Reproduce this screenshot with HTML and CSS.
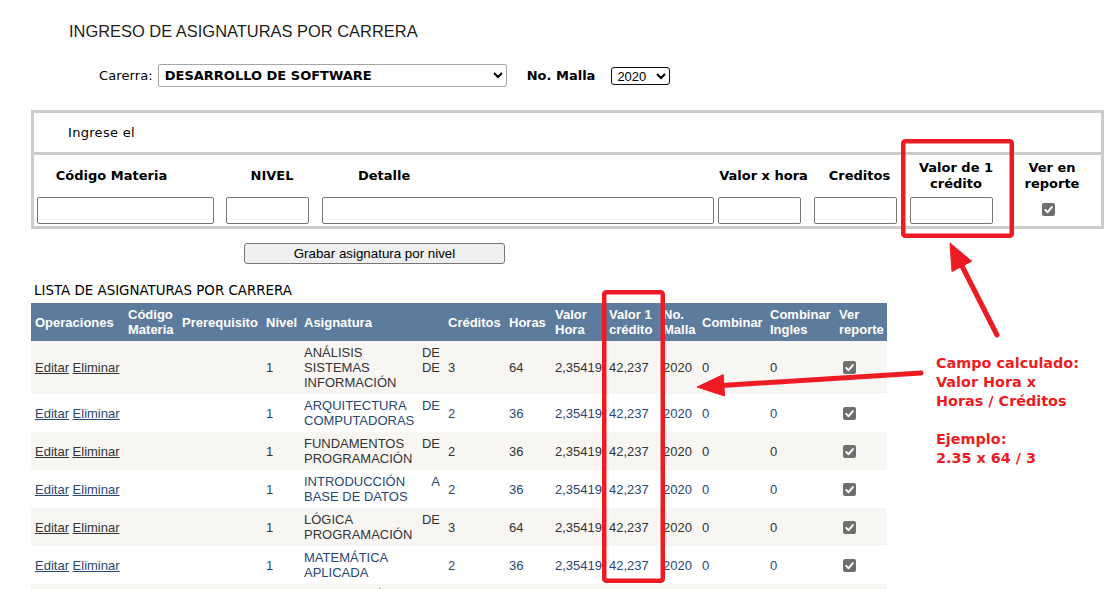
FILE: index.html
```html
<!DOCTYPE html>
<html lang="es">
<head>
<meta charset="utf-8">
<title>Ingreso de asignaturas por carrera</title>
<link rel="stylesheet" href="styles.css">
</head>
<body>
<div class="page">
  <h1 class="title">INGRESO DE ASIGNATURAS POR CARRERA</h1>

  <div class="filters">
    <span class="lbl">Carerra:</span>
    <select class="sel-carrera"><option>DESARROLLO DE SOFTWARE</option></select>
    <span class="lbl-bold">No. Malla</span>
    <select class="sel-malla"><option>2020</option></select>
  </div>

  <div class="form-box">
    <div class="form-intro">Ingrese el</div>
    <div class="form-fields">
      <div class="form-heads">
        <div class="fh fh-c">Código Materia</div>
        <div class="fh fh-c">NIVEL</div>
        <div class="fh fh-l">Detalle</div>
        <div class="fh fh-c">Valor x hora</div>
        <div class="fh fh-c">Creditos</div>
        <div class="fh fh-c fh-narrow">Valor de 1 crédito</div>
        <div class="fh fh-c fh-narrow2">Ver en reporte</div>
      </div>
      <div class="form-inputs">
        <input class="in in-codigo" type="text">
        <input class="in in-small gap-13b" type="text">
        <input class="in in-detalle gap-13" type="text">
        <input class="in in-small gap-4" type="text">
        <input class="in in-small gap-13" type="text">
        <input class="in in-small gap-13" type="text">
        <span class="chk chk-form"><svg viewBox="0 0 13 13" width="13" height="13"><path d="M3.2 6.9 L5.6 9.2 L9.9 4.1" fill="none" stroke="#fff" stroke-width="1.9" stroke-linecap="round" stroke-linejoin="round"/></svg></span>
      </div>
    </div>
  </div>

  <div class="actions"><button class="btn" type="button">Grabar asignatura por nivel</button></div>

  <div class="list-title">LISTA DE ASIGNATURAS POR CARRERA</div>

  <table class="grid">
    <colgroup>
      <col class="c-op"><col class="c-cod"><col class="c-pre"><col class="c-niv"><col class="c-asig"><col class="c-cre"><col class="c-hor"><col class="c-vh"><col class="c-vc"><col class="c-mal"><col class="c-comb"><col class="c-ing"><col class="c-ver">
    </colgroup>
    <thead>
      <tr>
        <th>Operaciones</th><th>Código Materia</th><th>Prerequisito</th><th>Nivel</th><th>Asignatura</th><th>Créditos</th><th>Horas</th><th>Valor Hora</th><th>Valor 1 crédito</th><th>No. Malla</th><th>Combinar</th><th>Combinar Ingles</th><th>Ver reporte</th>
      </tr>
    </thead>
    <tbody>
      <tr class="row-a">
        <td><a href="#">Editar</a> <a href="#">Eliminar</a></td><td></td><td></td><td>1</td><td class="asig">ANÁLISIS DE SISTEMAS DE INFORMACIÓN</td><td>3</td><td>64</td><td>2,35419</td><td>42,237</td><td>2020</td><td>0</td><td>0</td><td><span class="chk"><svg viewBox="0 0 13 13" width="13" height="13"><path d="M3.2 6.9 L5.6 9.2 L9.9 4.1" fill="none" stroke="#fff" stroke-width="1.9" stroke-linecap="round" stroke-linejoin="round"/></svg></span></td>
      </tr>
      <tr class="row-b">
        <td><a href="#">Editar</a> <a href="#">Eliminar</a></td><td></td><td></td><td>1</td><td class="asig">ARQUITECTURA DE COMPUTADORAS</td><td>2</td><td>36</td><td>2,35419</td><td>42,237</td><td>2020</td><td>0</td><td>0</td><td><span class="chk"><svg viewBox="0 0 13 13" width="13" height="13"><path d="M3.2 6.9 L5.6 9.2 L9.9 4.1" fill="none" stroke="#fff" stroke-width="1.9" stroke-linecap="round" stroke-linejoin="round"/></svg></span></td>
      </tr>
      <tr class="row-a">
        <td><a href="#">Editar</a> <a href="#">Eliminar</a></td><td></td><td></td><td>1</td><td class="asig">FUNDAMENTOS DE PROGRAMACIÓN</td><td>2</td><td>36</td><td>2,35419</td><td>42,237</td><td>2020</td><td>0</td><td>0</td><td><span class="chk"><svg viewBox="0 0 13 13" width="13" height="13"><path d="M3.2 6.9 L5.6 9.2 L9.9 4.1" fill="none" stroke="#fff" stroke-width="1.9" stroke-linecap="round" stroke-linejoin="round"/></svg></span></td>
      </tr>
      <tr class="row-b">
        <td><a href="#">Editar</a> <a href="#">Eliminar</a></td><td></td><td></td><td>1</td><td class="asig">INTRODUCCIÓN A BASE DE DATOS</td><td>2</td><td>36</td><td>2,35419</td><td>42,237</td><td>2020</td><td>0</td><td>0</td><td><span class="chk"><svg viewBox="0 0 13 13" width="13" height="13"><path d="M3.2 6.9 L5.6 9.2 L9.9 4.1" fill="none" stroke="#fff" stroke-width="1.9" stroke-linecap="round" stroke-linejoin="round"/></svg></span></td>
      </tr>
      <tr class="row-a">
        <td><a href="#">Editar</a> <a href="#">Eliminar</a></td><td></td><td></td><td>1</td><td class="asig">LÓGICA DE PROGRAMACIÓN</td><td>3</td><td>64</td><td>2,35419</td><td>42,237</td><td>2020</td><td>0</td><td>0</td><td><span class="chk"><svg viewBox="0 0 13 13" width="13" height="13"><path d="M3.2 6.9 L5.6 9.2 L9.9 4.1" fill="none" stroke="#fff" stroke-width="1.9" stroke-linecap="round" stroke-linejoin="round"/></svg></span></td>
      </tr>
      <tr class="row-b">
        <td><a href="#">Editar</a> <a href="#">Eliminar</a></td><td></td><td></td><td>1</td><td class="asig">MATEMÁTICA APLICADA</td><td>2</td><td>36</td><td>2,35419</td><td>42,237</td><td>2020</td><td>0</td><td>0</td><td><span class="chk"><svg viewBox="0 0 13 13" width="13" height="13"><path d="M3.2 6.9 L5.6 9.2 L9.9 4.1" fill="none" stroke="#fff" stroke-width="1.9" stroke-linecap="round" stroke-linejoin="round"/></svg></span></td>
      </tr>
      <tr class="row-a">
        <td><a href="#">Editar</a> <a href="#">Eliminar</a></td><td></td><td></td><td>1</td><td class="asig">TECNOLOGÍAS DE LA INFORMACIÓN Y COMUNICACIÓN</td><td>2</td><td>36</td><td>2,35419</td><td>42,237</td><td>2020</td><td>0</td><td>0</td><td><span class="chk"><svg viewBox="0 0 13 13" width="13" height="13"><path d="M3.2 6.9 L5.6 9.2 L9.9 4.1" fill="none" stroke="#fff" stroke-width="1.9" stroke-linecap="round" stroke-linejoin="round"/></svg></span></td>
      </tr>
    </tbody>
  </table>
</div>

<svg class="annot" width="1116" height="589" viewBox="0 0 1116 589">
  <rect x="903.25" y="141.25" width="108.5" height="94.5" rx="2" fill="none" stroke="#ed1c24" stroke-width="4.5"/>
  <rect x="604.25" y="292.25" width="58.5" height="288.5" rx="2" fill="none" stroke="#ed1c24" stroke-width="4.5"/>
  <line x1="997" y1="335" x2="962" y2="266" stroke="#ed1c24" stroke-width="5" stroke-linecap="round"/>
  <polygon points="950,243 952,271.5 971.8,261.2" fill="#ed1c24" stroke="#ed1c24" stroke-width="1" stroke-linejoin="round"/>
  <line x1="921" y1="373" x2="722" y2="385.4" stroke="#ed1c24" stroke-width="5" stroke-linecap="round"/>
  <polygon points="697,387 724.6,396 723.2,374.6" fill="#ed1c24" stroke="#ed1c24" stroke-width="1" stroke-linejoin="round"/>
</svg>
<div class="note">Campo calculado:<br>Valor Hora x<br>Horas / Créditos<br><br>Ejemplo:<br>2.35 x 64 / 3</div>
</body>
</html>
```

FILE: styles.css
```css
html, body {
  margin: 0;
  padding: 0;
}
body {
  position: relative;
  font-family: "DejaVu Sans", Verdana, sans-serif;
  font-size: 13px;
  color: #000;
  background: #fff;
  width: 1116px;
  overflow: hidden;
}
.page {
  padding-left: 31px;
}
.title {
  margin: 21px 0 0 38px;
  font-family: "Liberation Sans", Arial, sans-serif;
  font-weight: normal;
  font-size: 16.45px;
  line-height: 20px;
  color: #1e1e1e;
}
.filters {
  display: flex;
  align-items: center;
  height: 23px;
  margin-top: 23px;
  padding-left: 68px;
}
.lbl {
  font-size: 13px;
  letter-spacing: 0.1px;
}
.lbl-bold {
  font-weight: bold;
  margin-left: 20px;
}
.sel-carrera {
  margin-left: 5px;
  width: 349px;
  height: 23px;
  font-family: "DejaVu Sans", Verdana, sans-serif;
  font-weight: bold;
  font-size: 13px;
  color: #000;
  background: #fff;
  border: 1px solid #a6a6a6;
  border-radius: 2px;
  padding: 0 2px;
}
.sel-malla {
  margin-left: 16px;
  width: 59px;
  height: 18px;
  font-family: "Liberation Sans", Arial, sans-serif;
  font-size: 13px;
  color: #000;
  background: #fff;
  border: 1.5px solid #111;
  border-radius: 3px;
  padding: 0 1px;
}
.form-box {
  margin-top: 23px;
  width: 1073px;
  box-sizing: border-box;
  border: 3px solid #cccccc;
}
.form-intro {
  height: 39px;
  line-height: 40px;
  padding-left: 34px;
  letter-spacing: 0.3px;
  border-bottom: 3px solid #cccccc;
}
.form-fields {
  padding: 0 0 2px 3px;
}
.form-heads {
  display: grid;
  grid-template-columns: 149px 172px 357px 97px 95px 98px 94px;
  align-items: center;
  height: 42px;
  font-weight: bold;
  line-height: 16px;
}
.fh-c {
  text-align: center;
}
.fh-l {
  text-align: left;
}
.fh-narrow {
  padding: 0 8px;
}
.fh-narrow2 {
  padding: 0 14px;
}
.form-inputs {
  display: flex;
  align-items: center;
  height: 27px;
}
.in {
  box-sizing: border-box;
  height: 27px;
  margin: 0;
  border: 1px solid #767676;
  border-radius: 2px;
  background: #fff;
  padding: 1px 2px;
}
.in-codigo { width: 177px; }
.in-small { width: 83px; }
.in-detalle { width: 392px; }
.gap-13b { margin-left: 12px; }
.gap-13 { margin-left: 13px; }
.gap-4 { margin-left: 4px; }
.chk {
  display: inline-block;
  width: 13px;
  height: 13px;
  background: #6f6f6f;
  border-radius: 2px;
  vertical-align: middle;
  margin: 3px 3px 3px 4px;
}
.chk svg {
  display: block;
}
.chk-form {
  margin: 0 0 0 49px;
  position: relative;
  top: -1px;
}
.actions {
  margin-top: 14px;
  padding-left: 213px;
}
.btn {
  display: block;
  width: 261px;
  height: 21px;
  box-sizing: border-box;
  margin: 0;
  padding: 0;
  font-family: "Liberation Sans", Arial, sans-serif;
  font-size: 13.33px;
  color: #000;
  background: #efefef;
  border: 1px solid #767676;
  border-radius: 3px;
}
.list-title {
  margin-top: 19px;
  padding-left: 3px;
  line-height: 16px;
  font-size: 13.4px;
}
.grid {
  margin-top: 4px;
  width: 856px;
  table-layout: fixed;
  border-collapse: collapse;
  font-family: "Liberation Sans", Arial, sans-serif;
  font-size: 13px;
  line-height: 15px;
}
.c-op { width: 93px; }
.c-cod { width: 54px; }
.c-pre { width: 84px; }
.c-niv { width: 38px; }
.c-asig { width: 144px; }
.c-cre { width: 61px; }
.c-hor { width: 46px; }
.c-vh { width: 54px; }
.c-vc { width: 54px; }
.c-mal { width: 39px; }
.c-comb { width: 68px; }
.c-ing { width: 69px; }
.c-ver { width: 52px; }
.grid th {
  background: #5d7b9d;
  color: #fff;
  font-weight: bold;
  text-align: left;
  vertical-align: middle;
  padding: 4px 2px 4px 4px;
}
.grid td {
  vertical-align: middle;
  padding: 4px 3px 4px 4px;
  text-align: left;
}
.grid td.asig {
  text-align: justify;
  padding-right: 4px;
}
.row-a {
  background: #f7f6f3;
  color: #333333;
}
.row-b {
  background: #ffffff;
  color: #284775;
}
.grid a {
  color: inherit;
  text-decoration: underline;
}
.annot {
  position: absolute;
  left: 0;
  top: 0;
  pointer-events: none;
}
.note {
  position: absolute;
  left: 936px;
  top: 354px;
  font-family: "DejaVu Sans", Verdana, sans-serif;
  font-weight: bold;
  font-size: 14.4px;
  line-height: 19px;
  color: #ed1c24;
}
```
